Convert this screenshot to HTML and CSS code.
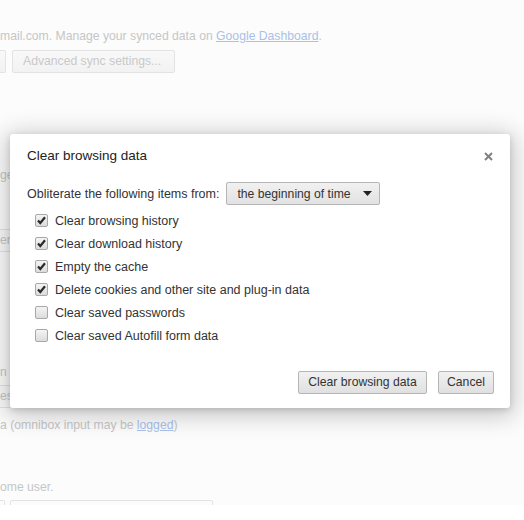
FILE: index.html
```html
<!DOCTYPE html>
<html>
<head>
<meta charset="utf-8">
<link rel="stylesheet" href="styles.css">
</head>
<body>
<div class="page">
  <div class="bg-line l1">mail.com. Manage your synced data on <span class="bg-link">Google Dashboard</span>.</div>
  <div class="bg-btnrow">
    <span class="bg-btn cut1"></span>
    <span class="bg-btn adv">Advanced sync settings...</span>
  </div>
  <div class="bg-line l2">ge</div>
  <div class="bg-box b1">er</div>
  <div class="bg-line l3">n s</div>
  <div class="bg-box b2">es</div>
  <div class="bg-line l4">a (omnibox input may be <span class="bg-link">logged</span>)</div>
  <div class="bg-line l5">ome user.</div>
  <div class="bg-inputs">
    <span class="bg-input i1"></span>
    <span class="bg-input i2"></span>
  </div>
</div>

<div class="dialog">
  <div class="dlg-head">
    <span class="dlg-title">Clear browsing data</span>
    <svg class="close" width="9" height="9" viewBox="0 0 9 9"><path d="M1 1 L8 8 M8 1 L1 8" stroke="#808080" stroke-width="2" fill="none"/></svg>
  </div>
  <div class="dlg-body">
    <div class="sel-row">
      <span>Obliterate the following items from:</span>
      <span class="select">the beginning of time<svg class="arrow" width="9" height="5" viewBox="0 0 9 5"><path d="M0 0 H9 L4.5 5 Z" fill="#222"/></svg></span>
    </div>
    <div class="checks">
      <div class="chk-row"><span class="cb on"><svg width="13" height="13" viewBox="0 0 13 13"><path d="M3 6.5 L5.3 9 L10 3.3" stroke="#2a2a2a" stroke-width="2.2" fill="none"/></svg></span>Clear browsing history</div>
      <div class="chk-row"><span class="cb on"><svg width="13" height="13" viewBox="0 0 13 13"><path d="M3 6.5 L5.3 9 L10 3.3" stroke="#2a2a2a" stroke-width="2.2" fill="none"/></svg></span>Clear download history</div>
      <div class="chk-row"><span class="cb on"><svg width="13" height="13" viewBox="0 0 13 13"><path d="M3 6.5 L5.3 9 L10 3.3" stroke="#2a2a2a" stroke-width="2.2" fill="none"/></svg></span>Empty the cache</div>
      <div class="chk-row"><span class="cb on"><svg width="13" height="13" viewBox="0 0 13 13"><path d="M3 6.5 L5.3 9 L10 3.3" stroke="#2a2a2a" stroke-width="2.2" fill="none"/></svg></span>Delete cookies and other site and plug-in data</div>
      <div class="chk-row"><span class="cb"></span>Clear saved passwords</div>
      <div class="chk-row"><span class="cb"></span>Clear saved Autofill form data</div>
    </div>
  </div>
  <div class="dlg-foot">
    <span class="btn b-clear">Clear browsing data</span>
    <span class="btn b-cancel">Cancel</span>
  </div>
</div>
</body>
</html>
```

FILE: styles.css
```css
html, body {
  margin: 0;
  padding: 0;
  background: #ffffff;
  font-family: "Liberation Sans", Arial, sans-serif;
  font-size: 12.5px;
}

.page {
  position: relative;
  height: 505px;
  overflow: hidden;
  background: #fcfcfc;
  color: #c6c6c6;
  font-size: 12.2px;
}

.bg-line {
  height: 16px;
  line-height: 16px;
  white-space: nowrap;
}

.bg-link {
  color: #a9c1ea;
  text-decoration: underline;
}

.l1 { padding-top: 28px; }

.bg-btnrow {
  display: flex;
  gap: 6px;
  margin-top: 6px;
}

.bg-btn {
  box-sizing: border-box;
  height: 23px;
  line-height: 21px;
  padding: 0 10px;
  border: 1px solid #e3e3e3;
  border-radius: 2px;
  background: linear-gradient(#f9f9f9, #f2f2f2);
  color: #c9c9c9;
  white-space: nowrap;
}

.cut1 {
  width: 6px;
  padding: 0;
  border-left: none;
  border-radius: 0 2px 2px 0;
}

.adv { width: 163px; }

.l2 { margin-top: 94px; }

.bg-box {
  box-sizing: border-box;
  height: 23px;
  line-height: 21px;
  width: 10px;
  border-top: 1px solid #e3e3e3;
  border-bottom: 1px solid #e3e3e3;
  background: #fafafa;
  white-space: nowrap;
}

.b1 { margin-top: 46px; }
.l3 { margin-top: 112px; }
.b2 { margin-top: 5px; }
.l4 { margin-top: 9px; }
.l5 { margin-top: 46px; }

.bg-inputs {
  display: flex;
  gap: 5px;
  margin-top: 5px;
}

.bg-input {
  box-sizing: border-box;
  height: 23px;
  border: 1px solid #e3e3e3;
  border-radius: 2px;
  background: #fcfcfc;
}

.i1 {
  width: 5px;
  border-left: none;
  border-radius: 0 2px 2px 0;
}

.i2 { width: 203px; }

.dialog {
  position: absolute;
  left: 10px;
  top: 134px;
  width: 500px;
  background: #ffffff;
  border-radius: 3px;
  box-shadow: 0 4px 23px 5px rgba(0, 0, 0, 0.2), 0 2px 6px rgba(0, 0, 0, 0.15);
  color: #333333;
}

.dlg-head {
  display: flex;
  justify-content: space-between;
  align-items: center;
  padding: 14px 17px 0 17px;
  height: 16px;
}

.dlg-title {
  font-size: 13.5px;
  line-height: 16px;
  color: #222;
}

.close { display: block; }

.dlg-body {
  padding: 18px 17px 0 17px;
}

.sel-row {
  display: flex;
  align-items: center;
  gap: 7px;
  height: 23px;
}

.select {
  box-sizing: border-box;
  width: 154px;
  height: 23px;
  display: flex;
  align-items: center;
  justify-content: space-between;
  padding: 0 7px 0 10px;
  border: 1px solid #b5b5b5;
  border-radius: 2px;
  background: linear-gradient(#f1f1f1, #e2e2e2);
  color: #333;
  font-size: 12.2px;
}

.checks {
  margin-top: 4px;
  padding-left: 8px;
}

.chk-row {
  display: flex;
  align-items: center;
  gap: 7px;
  height: 23px;
}

.cb {
  box-sizing: border-box;
  width: 13px;
  height: 13px;
  border: 1px solid #a8a8a8;
  border-radius: 2px;
  background: linear-gradient(#f4f4f4, #dcdcdc);
  position: relative;
  flex: none;
}

.cb svg {
  position: absolute;
  left: -1px;
  top: -1px;
}

.dlg-foot {
  display: flex;
  justify-content: flex-end;
  gap: 11px;
  padding: 24px 16px 14px 16px;
}

.btn {
  box-sizing: border-box;
  height: 23px;
  line-height: 21px;
  padding: 0;
  text-align: center;
  border: 1px solid #b5b5b5;
  border-radius: 2px;
  background: linear-gradient(#f1f1f1, #e0e0e0);
  color: #333;
  white-space: nowrap;
  font-size: 12.2px;
}

.b-clear { width: 129px; }
.b-cancel { width: 56px; }
```
